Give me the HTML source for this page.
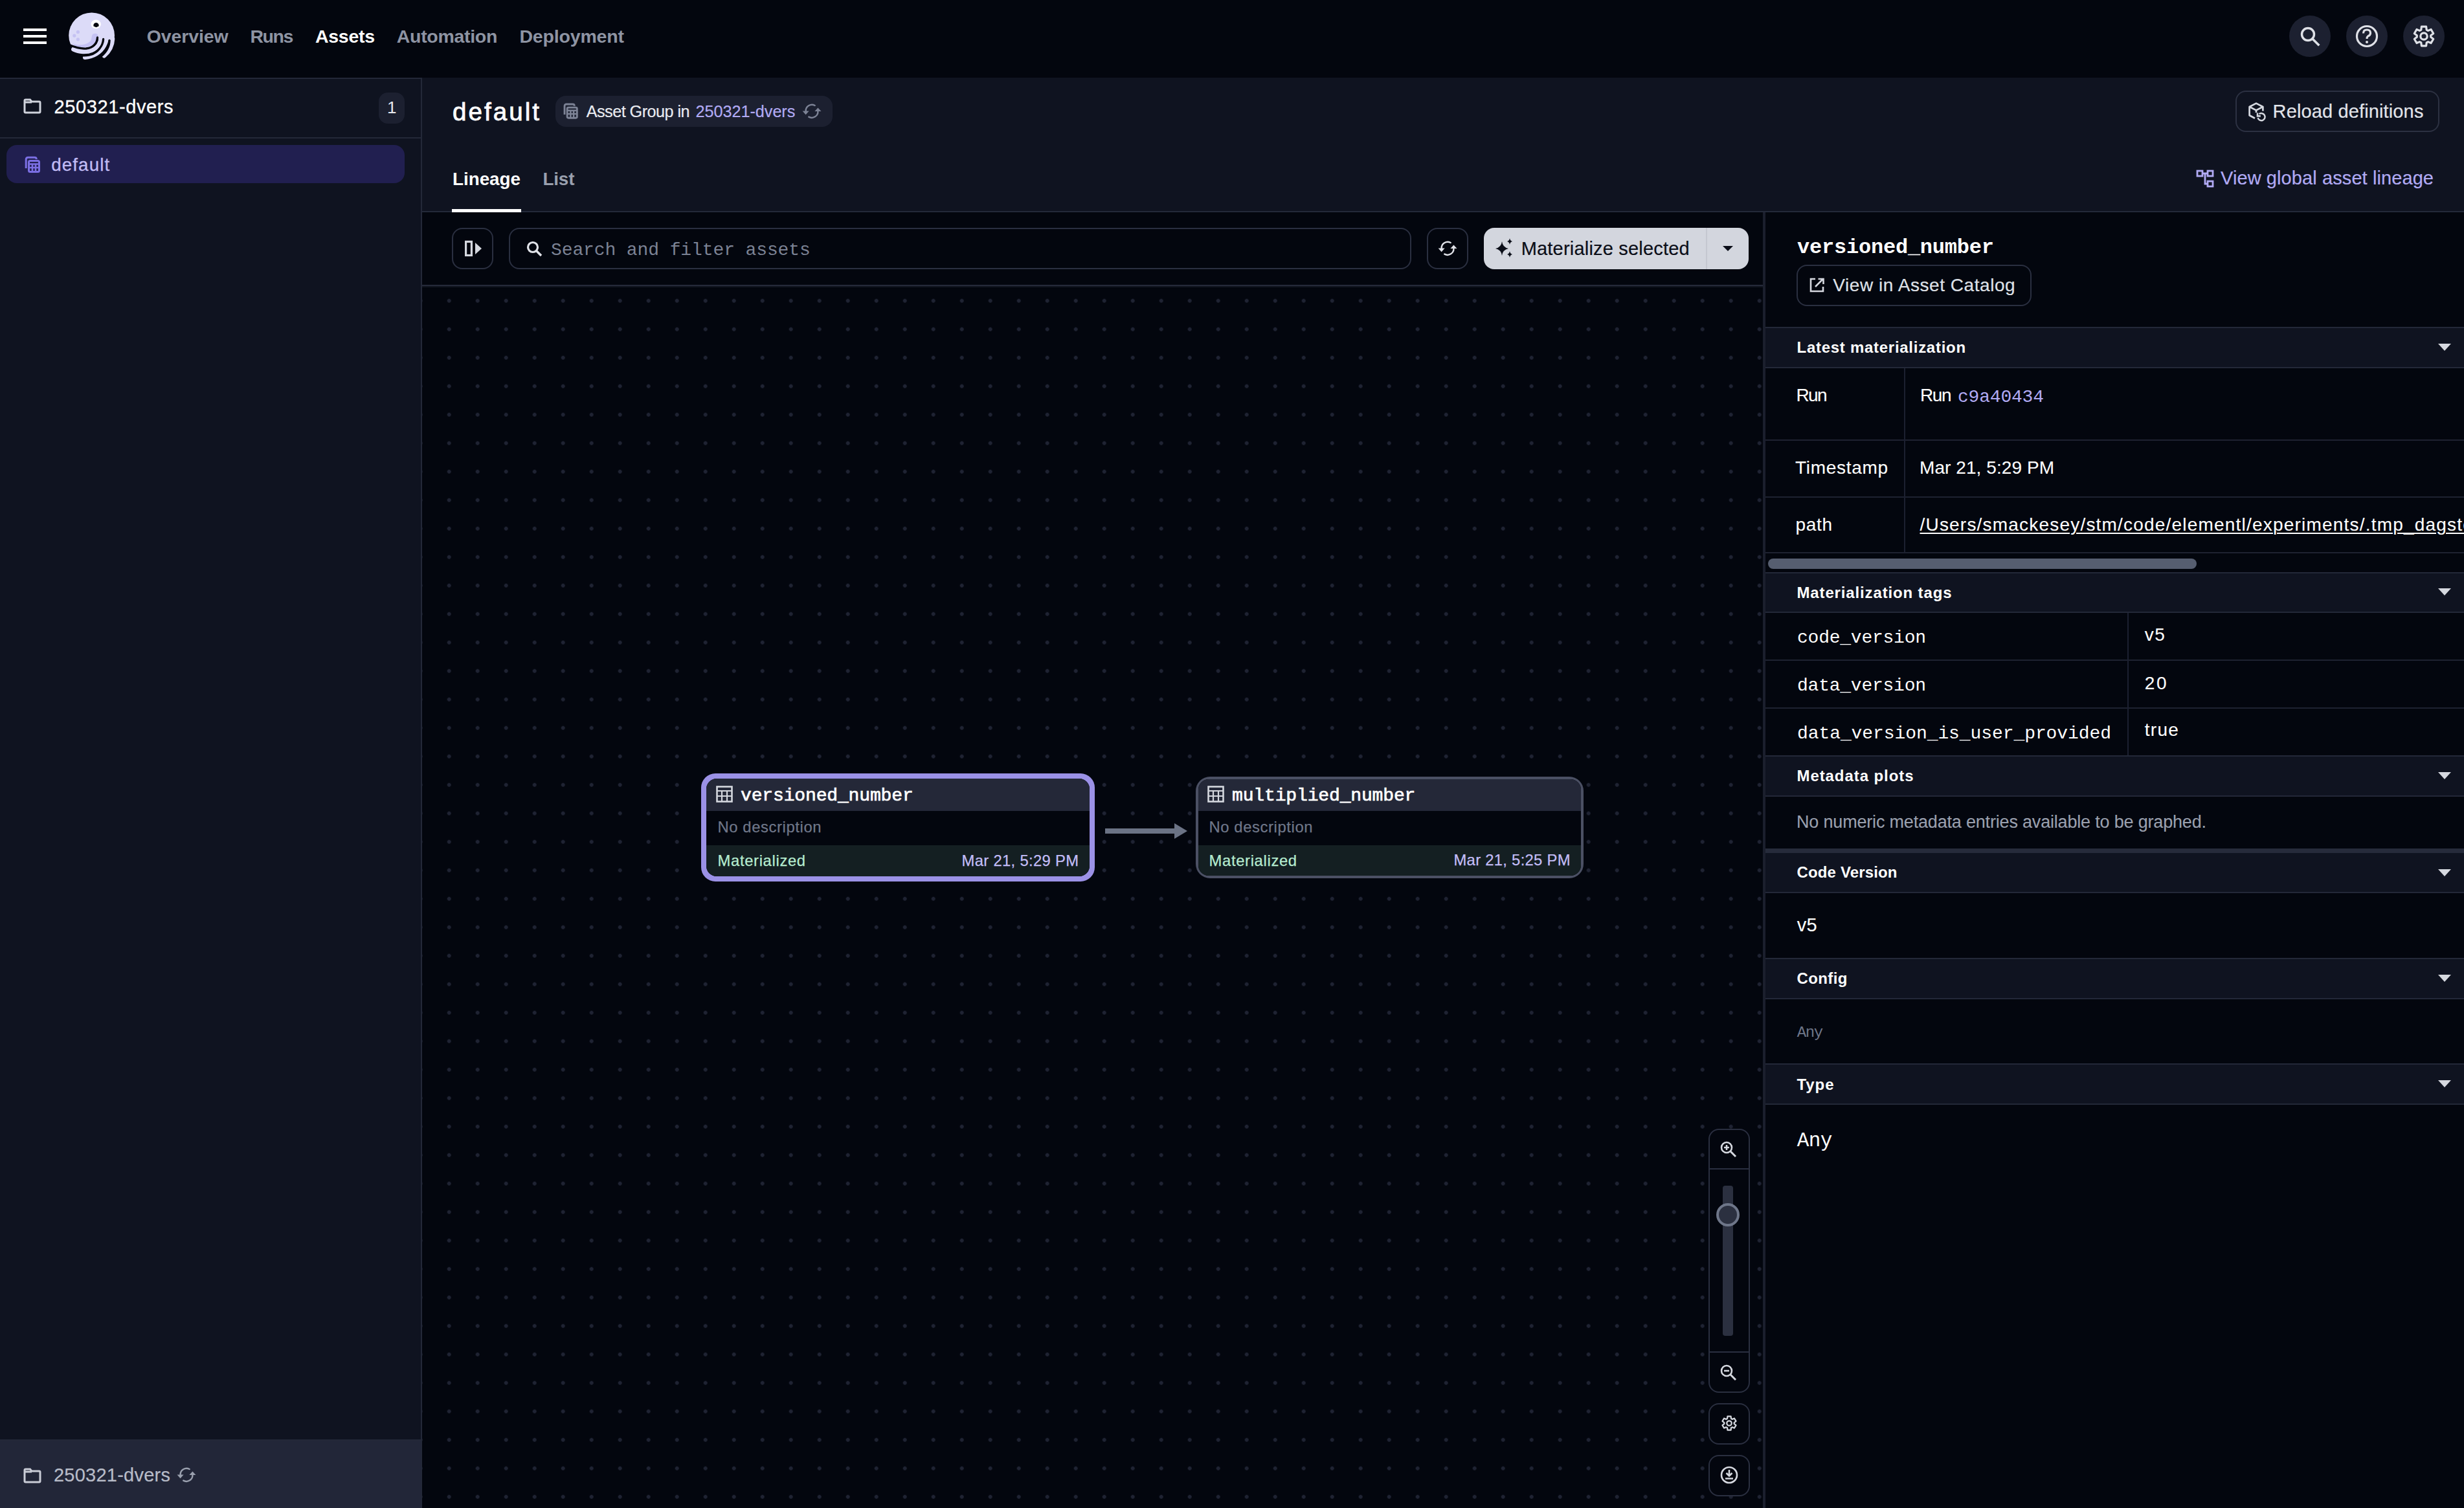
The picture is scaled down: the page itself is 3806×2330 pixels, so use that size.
<!DOCTYPE html>
<html><head><meta charset="utf-8"><title>Dagster</title>
<style>
html,body{margin:0;padding:0;}
body{width:3806px;height:2330px;overflow:hidden;position:relative;background:#03060e;font-family:"Liberation Sans",sans-serif;}
</style></head><body>
<div style="position:absolute;left:0px;top:0px;width:3806px;height:120px;background:#03060e"></div>
<div style="position:absolute;left:0px;top:120px;width:650px;height:2px;background:#232838"></div>
<div style="position:absolute;left:36px;top:44px;width:36px;height:4px;background:#fff"></div>
<div style="position:absolute;left:36px;top:54px;width:36px;height:4px;background:#fff"></div>
<div style="position:absolute;left:36px;top:64px;width:36px;height:4px;background:#fff"></div>
<svg style="position:absolute;left:100px;top:14px" width="84" height="84" viewBox="0 0 84 84">
<defs><clipPath id="hc"><path d="M0 0 H84 V44 L69 48.5 L59.6 46.5 L50.5 44 C 50 53 44 60 33 61 C 25 61.5 18 60 0 54 Z"/></clipPath></defs>
<circle cx="41.6" cy="40.8" r="35.4" fill="#dcdbf8" clip-path="url(#hc)"/>
<path d="M43.5 38.5 C 50 36 53 40 51 46 C 47 56 36 60 24 59 C 18 58.5 14 56 12 53 C 20 57 34 56 40 49 C 42 46 41 41 43.5 38.5 Z" fill="#c5c2f3"/>
<circle cx="20.4" cy="35.4" r="2.6" fill="#c5c2f3"/><circle cx="14.8" cy="41.1" r="2.6" fill="#c5c2f3"/><circle cx="20.4" cy="46.8" r="2.6" fill="#c5c2f3"/>
<path d="M13.6 62.2 C 22 66.5 34 67 42 63.5 C 52 59 56 52 55.5 44" stroke="#dcdbf8" stroke-width="7" fill="none" stroke-linecap="round"/>
<path d="M31.4 74.4 C 44 73.5 55 67 61 56 C 63 52 64.5 49 64.5 45" stroke="#dcdbf8" stroke-width="7" fill="none" stroke-linecap="round"/>
<path d="M60.8 72.2 C 68 66 73.5 58 74 46" stroke="#dcdbf8" stroke-width="6.6" fill="none" stroke-linecap="round"/>
<path d="M50.5 44 C 50 53 44 60 33 61 C 25 61.5 18 60 6 55" stroke="#03060e" stroke-width="3.3" fill="none" stroke-linecap="round"/>
<path d="M59.6 46.5 C 59 57 51 67 40 70.5 C 36 71.7 32 72 24 72" stroke="#03060e" stroke-width="3.3" fill="none" stroke-linecap="round"/>
<path d="M69 48.5 C 69 58 65 66 55 74" stroke="#03060e" stroke-width="3.3" fill="none" stroke-linecap="round"/>
<ellipse cx="48.2" cy="23.4" rx="7.6" ry="6.8" fill="#fff"/>
<path d="M44.5 26.5 A 4.2 4.2 0 1 1 52.5 26.5 L 48.5 28.2 Z" fill="#03060e"/>
</svg>
<div style="position:absolute;left:226.70px;top:41.87px;font:700 28.5px/28.5px 'Liberation Sans', sans-serif;color:#8e94a3;letter-spacing:-0.107px;white-space:nowrap;">Overview</div>
<div style="position:absolute;left:386.40px;top:41.87px;font:700 28.5px/28.5px 'Liberation Sans', sans-serif;color:#8e94a3;letter-spacing:-1.417px;white-space:nowrap;">Runs</div>
<div style="position:absolute;left:487.00px;top:41.87px;font:700 28.5px/28.5px 'Liberation Sans', sans-serif;color:#ffffff;letter-spacing:-0.296px;white-space:nowrap;">Assets</div>
<div style="position:absolute;left:612.80px;top:41.87px;font:700 28.5px/28.5px 'Liberation Sans', sans-serif;color:#8e94a3;letter-spacing:-0.313px;white-space:nowrap;">Automation</div>
<div style="position:absolute;left:802.40px;top:41.87px;font:700 28.5px/28.5px 'Liberation Sans', sans-serif;color:#8e94a3;letter-spacing:-0.168px;white-space:nowrap;">Deployment</div>
<div style="position:absolute;left:3536px;top:24px;width:64px;height:64px;border-radius:50%;background:#1c2030"></div>
<div style="position:absolute;left:3624px;top:24px;width:64px;height:64px;border-radius:50%;background:#1c2030"></div>
<div style="position:absolute;left:3712px;top:24px;width:64px;height:64px;border-radius:50%;background:#1c2030"></div>
<svg style="position:absolute;left:3548px;top:36px" width="40" height="40" viewBox="0 0 40 40">
<circle cx="17" cy="17" r="9.5" stroke="#dfe1e7" stroke-width="3.4" fill="none"/><path d="M24 24 L 33 33" stroke="#dfe1e7" stroke-width="3.6" stroke-linecap="square"/></svg>
<svg style="position:absolute;left:3636px;top:36px" width="40" height="40" viewBox="0 0 40 40">
<circle cx="20" cy="20" r="15.5" stroke="#dfe1e7" stroke-width="3.2" fill="none"/>
<path d="M14.5 15.5 Q 14.5 10 20 10 Q 25.5 10 25.5 15 Q 25.5 18.5 21.5 20 Q 20 21 20 24" stroke="#dfe1e7" stroke-width="3.2" fill="none"/>
<circle cx="20" cy="29" r="2" fill="#dfe1e7"/></svg>
<svg style="position:absolute;left:3724px;top:36px" width="40" height="40" viewBox="0 0 40 40"><path d="M15.80 10.05 L16.40 5.13 L23.60 5.13 L24.20 10.05 L26.52 11.39 L31.08 9.45 L34.68 15.68 L30.72 18.66 L30.72 21.34 L34.68 24.32 L31.08 30.55 L26.52 28.61 L24.20 29.95 L23.60 34.87 L16.40 34.87 L15.80 29.95 L13.48 28.61 L8.92 30.55 L5.32 24.32 L9.28 21.34 L9.28 18.66 L5.32 15.68 L8.92 9.45 L13.48 11.39 Z" stroke="#dfe1e7" stroke-width="3.2" fill="none" stroke-linejoin="round"/><circle cx="20" cy="20" r="5.2" stroke="#dfe1e7" stroke-width="3.2" fill="none"/></svg>
<div style="position:absolute;left:0px;top:122px;width:650px;height:2208px;background:#0f1320"></div>
<div style="position:absolute;left:650px;top:120px;width:2px;height:2210px;background:#232838"></div>
<div style="position:absolute;left:0px;top:212px;width:650px;height:2px;background:#232838"></div>
<svg style="position:absolute;left:36px;top:152px" width="28" height="24" viewBox="0 0 28 24">
<path d="M2 3.5 Q2 2 3.5 2 H10.5 L13 5 H24.5 Q26 5 26 6.5 V20.5 Q26 22 24.5 22 H3.5 Q2 22 2 20.5 Z" stroke="#d0d3dc" stroke-width="3" fill="none"/>
<path d="M2 6 H13" stroke="#d0d3dc" stroke-width="3"/></svg>
<div style="position:absolute;left:83.50px;top:151.05px;font:400 29px/29px 'Liberation Sans', sans-serif;color:#ffffff;letter-spacing:0.605px;white-space:nowrap;-webkit-text-stroke:0.3px #ffffff;">250321-dvers</div>
<div style="position:absolute;left:585px;top:143px;width:40px;height:48px;background:#1c2030;border-radius:14px"></div>
<div style="position:absolute;left:598.00px;top:152.99px;font:400 26px/26px 'Liberation Sans', sans-serif;color:#e6e8ee;letter-spacing:0.000px;white-space:nowrap;">1</div>
<div style="position:absolute;left:10px;top:224px;width:615px;height:59px;background:#211f50;border-radius:16px"></div>
<svg style="position:absolute;left:37px;top:240px" width="26.0" height="28.0" viewBox="0 0 26 28">
<path d="M3.2 20 V6.2 Q3.2 3.2 6.2 3.2 H16.5 Q19.3 3.2 19.3 6" stroke="#7b6fe3" stroke-width="3" fill="none"/>
<rect x="7.5" y="8.5" width="16" height="17" rx="2" stroke="#7b6fe3" stroke-width="3" fill="none"/>
<path d="M7.5 13.5 H23.5 M7.5 19 H23.5 M13 13.5 V25.5 M18 13.5 V25.5" stroke="#7b6fe3" stroke-width="2.6"/></svg>
<div style="position:absolute;left:79.20px;top:240.77px;font:400 27.8px/27.8px 'Liberation Sans', sans-serif;color:#c1bcf5;letter-spacing:1.088px;white-space:nowrap;-webkit-text-stroke:0.3px #c1bcf5;">default</div>
<div style="position:absolute;left:0px;top:2224px;width:650px;height:2px;background:#232838"></div>
<div style="position:absolute;left:0px;top:2226px;width:650px;height:104px;background:#222638"></div>
<svg style="position:absolute;left:36px;top:2268px" width="28" height="24" viewBox="0 0 28 24">
<path d="M2 3.5 Q2 2 3.5 2 H10.5 L13 5 H24.5 Q26 5 26 6.5 V20.5 Q26 22 24.5 22 H3.5 Q2 22 2 20.5 Z" stroke="#c9ccd6" stroke-width="3" fill="none"/>
<path d="M2 6 H13" stroke="#c9ccd6" stroke-width="3"/></svg>
<div style="position:absolute;left:83.00px;top:2265.45px;font:400 29px/29px 'Liberation Sans', sans-serif;color:#b8bcc8;letter-spacing:0.241px;white-space:nowrap;-webkit-text-stroke:0.2px #b8bcc8;">250321-dvers</div>
<svg style="position:absolute;left:268px;top:2259px" width="40" height="40" viewBox="0 0 40 40">
<path d="M24.7 11 A9.5 9.5 0 0 0 10.6 19.8" stroke="#9aa0ae" stroke-width="2.4" fill="none" stroke-linecap="round"/>
<path d="M5.6 19.6 L15.6 19.6 L10.6 25.2 Z" fill="#9aa0ae"/>
<path d="M15.3 28.6 A9.5 9.5 0 0 0 29.4 19.6" stroke="#9aa0ae" stroke-width="2.4" fill="none" stroke-linecap="round"/>
<path d="M24.4 19.9 L34.5 19.9 L29.4 14.6 Z" fill="#9aa0ae"/></svg>
<div style="position:absolute;left:652px;top:120px;width:3154px;height:206px;background:#0f1320"></div>
<div style="position:absolute;left:652px;top:326px;width:3154px;height:2px;background:#242939"></div>
<div style="position:absolute;left:699.00px;top:153.71px;font:400 38.5px/38.5px 'Liberation Sans', sans-serif;color:#ffffff;letter-spacing:3.067px;white-space:nowrap;-webkit-text-stroke:0.8px #ffffff;">default</div>
<div style="position:absolute;left:858px;top:148px;width:428px;height:48px;background:#1c2030;border-radius:16px"></div>
<svg style="position:absolute;left:869px;top:158px" width="24.7" height="26.599999999999998" viewBox="0 0 26 28">
<path d="M3.2 20 V6.2 Q3.2 3.2 6.2 3.2 H16.5 Q19.3 3.2 19.3 6" stroke="#7d8396" stroke-width="3" fill="none"/>
<rect x="7.5" y="8.5" width="16" height="17" rx="2" stroke="#7d8396" stroke-width="3" fill="none"/>
<path d="M7.5 13.5 H23.5 M7.5 19 H23.5 M13 13.5 V25.5 M18 13.5 V25.5" stroke="#7d8396" stroke-width="2.6"/></svg>
<div style="position:absolute;left:905.70px;top:159.67px;font:400 25.2px/25.2px 'Liberation Sans', sans-serif;color:#e9ebf0;letter-spacing:-0.514px;white-space:nowrap;-webkit-text-stroke:0.2px #e9ebf0;">Asset Group in</div>
<div style="position:absolute;left:1074.60px;top:159.67px;font:400 25.2px/25.2px 'Liberation Sans', sans-serif;color:#b1aaf3;letter-spacing:-0.028px;white-space:nowrap;-webkit-text-stroke:0.2px #b1aaf3;">250321-dvers</div>
<svg style="position:absolute;left:1234px;top:152px" width="40" height="40" viewBox="0 0 40 40">
<path d="M24.7 11 A9.5 9.5 0 0 0 10.6 19.8" stroke="#7d8396" stroke-width="2.4" fill="none" stroke-linecap="round"/>
<path d="M5.6 19.6 L15.6 19.6 L10.6 25.2 Z" fill="#7d8396"/>
<path d="M15.3 28.6 A9.5 9.5 0 0 0 29.4 19.6" stroke="#7d8396" stroke-width="2.4" fill="none" stroke-linecap="round"/>
<path d="M24.4 19.9 L34.5 19.9 L29.4 14.6 Z" fill="#7d8396"/></svg>
<div style="position:absolute;left:3453px;top:140px;width:315px;height:64px;border:2px solid #2c3142;border-radius:16px;box-sizing:border-box"></div>
<svg style="position:absolute;left:3466px;top:152px" width="40" height="40" viewBox="0 0 40 40">
<path d="M17 30.8 L8.6 26.2 V13 L19 7.6 L29.4 13 V19.6" stroke="#d5d8df" stroke-width="2.7" fill="none" stroke-linejoin="round"/>
<path d="M8.6 13 L19 18.4 L29.4 13 M19 18.4 V22" stroke="#d5d8df" stroke-width="2.7" fill="none" stroke-linejoin="round"/>
<path d="M21.6 30.2 A5.6 5.6 0 1 0 23.6 24.2" stroke="#d5d8df" stroke-width="2.5" fill="none"/>
<path d="M21 22.6 V27.4 H25.8" stroke="#d5d8df" stroke-width="2.6" fill="none"/></svg>
<div style="position:absolute;left:3510.60px;top:157.65px;font:400 29px/29px 'Liberation Sans', sans-serif;color:#e2e4ea;letter-spacing:0.132px;white-space:nowrap;-webkit-text-stroke:0.2px #e2e4ea;">Reload definitions</div>
<div style="position:absolute;left:699.00px;top:262.77px;font:700 27.8px/27.8px 'Liberation Sans', sans-serif;color:#ffffff;letter-spacing:-0.009px;white-space:nowrap;">Lineage</div>
<div style="position:absolute;left:838.40px;top:262.77px;font:700 27.8px/27.8px 'Liberation Sans', sans-serif;color:#9aa0ae;letter-spacing:-0.142px;white-space:nowrap;">List</div>
<div style="position:absolute;left:698px;top:323px;width:107px;height:5px;background:#fff"></div>
<svg style="position:absolute;left:3392px;top:262px" width="28" height="28" viewBox="0 0 28 28">
<rect x="2" y="2" width="8" height="8" stroke="#b1aaf3" stroke-width="2.8" fill="none"/>
<rect x="18" y="2" width="8" height="8" stroke="#b1aaf3" stroke-width="2.8" fill="none"/>
<rect x="18" y="18" width="8" height="8" stroke="#b1aaf3" stroke-width="2.8" fill="none"/>
<path d="M10 6 H18 M14 6 V22 H18" stroke="#b1aaf3" stroke-width="2.8" fill="none"/></svg>
<div style="position:absolute;left:3430.00px;top:261.45px;font:400 29px/29px 'Liberation Sans', sans-serif;color:#b1aaf3;letter-spacing:0.094px;white-space:nowrap;-webkit-text-stroke:0.2px #b1aaf3;">View global asset lineage</div>
<div style="position:absolute;left:652px;top:328px;width:2071px;height:2002px;background:#03060e"></div>
<div style="position:absolute;left:652px;top:443px;width:2071px;height:1887px;background-image:radial-gradient(circle, #1f2333 2.6px, transparent 3.2px);background-size:44px 44px;background-position:19.7px -0.3px"></div>
<div style="position:absolute;left:652px;top:328px;width:2071px;height:112px;background:#03060e"></div>
<div style="position:absolute;left:652px;top:440px;width:2071px;height:2px;background:#252a3a"></div>
<div style="position:absolute;left:652px;top:442px;width:2071px;height:2px;background:#10141f"></div>
<div style="position:absolute;left:698px;top:352px;width:64px;height:64px;border:2px solid #2a2f40;border-radius:16px;box-sizing:border-box"></div>
<svg style="position:absolute;left:710px;top:364px" width="40" height="40" viewBox="0 0 40 40">
<rect x="9.6" y="9.4" width="8.8" height="21.1" stroke="#d5d8df" stroke-width="3.2" fill="none"/>
<path d="M24 11 L34 20 L24 29 Z" fill="#d5d8df"/></svg>
<div style="position:absolute;left:786px;top:352px;width:1394px;height:64px;border:2px solid #2a2f40;border-radius:16px;box-sizing:border-box"></div>
<svg style="position:absolute;left:811px;top:370px" width="30" height="30" viewBox="0 0 30 30">
<circle cx="12" cy="12" r="7.5" stroke="#e1e3e9" stroke-width="3.2" fill="none"/><path d="M17.5 17.5 L25 25" stroke="#e1e3e9" stroke-width="3.6"/></svg>
<div style="position:absolute;left:851.00px;top:373.15px;font:400 28px/28px 'Liberation Mono', monospace;color:#7b8294;letter-spacing:-0.107px;white-space:nowrap;">Search and filter assets</div>
<div style="position:absolute;left:2204px;top:352px;width:64px;height:64px;border:2px solid #2a2f40;border-radius:16px;box-sizing:border-box"></div>
<svg style="position:absolute;left:2216px;top:364px" width="40" height="40" viewBox="0 0 40 40">
<path d="M24.7 11 A9.5 9.5 0 0 0 10.6 19.8" stroke="#e1e3e9" stroke-width="2.4" fill="none" stroke-linecap="round"/>
<path d="M5.6 19.6 L15.6 19.6 L10.6 25.2 Z" fill="#e1e3e9"/>
<path d="M15.3 28.6 A9.5 9.5 0 0 0 29.4 19.6" stroke="#e1e3e9" stroke-width="2.4" fill="none" stroke-linecap="round"/>
<path d="M24.4 19.9 L34.5 19.9 L29.4 14.6 Z" fill="#e1e3e9"/></svg>
<div style="position:absolute;left:2292px;top:352px;width:409px;height:64px;background:#d3d6de;border-radius:16px"></div>
<div style="position:absolute;left:2635px;top:352px;width:2px;height:64px;background:#c4c7d0"></div>
<svg style="position:absolute;left:2308px;top:367px" width="32" height="32" viewBox="0 0 32 32">
<path d="M12 6 Q13 15 22 17 Q13 19 12 28 Q11 19 2 17 Q11 15 12 6 Z" fill="#0b0e18"/>
<path d="M24 1 Q24.5 5 28 6 Q24.5 7 24 11 Q23.5 7 20 6 Q23.5 5 24 1 Z" fill="#0b0e18"/>
<path d="M24 21 Q24.5 25 28 26 Q24.5 27 24 31 Q23.5 27 20 26 Q23.5 25 24 21 Z" fill="#0b0e18"/></svg>
<div style="position:absolute;left:2349.70px;top:369.75px;font:400 29px/29px 'Liberation Sans', sans-serif;color:#0b0e18;letter-spacing:0.195px;white-space:nowrap;-webkit-text-stroke:0.2px #0b0e18;">Materialize selected</div>
<svg style="position:absolute;left:2659px;top:378px" width="20" height="12" viewBox="0 0 20 12"><path d="M2 2 H18 L10 10 Z" fill="#0b0e18"/></svg>
<div style="position:absolute;left:1083px;top:1195px;width:608px;height:167px;background:#9b91e6;border-radius:22px"></div>
<div style="position:absolute;left:1091px;top:1203px;width:592px;height:151px;border-radius:16px;overflow:hidden;background:#03060e"><div style="position:absolute;left:0;top:0;right:0;height:50px;background:#242838"></div><div style="position:absolute;left:0;top:103px;right:0;bottom:0;background:#141f22"></div></div>
<svg style="position:absolute;left:1106px;top:1214px" width="26" height="26" viewBox="0 0 26 26">
<rect x="1.5" y="1.5" width="23" height="23" stroke="#d4d7de" stroke-width="2.6" fill="none"/>
<path d="M1.5 8 H24.5 M1.5 16 H24.5 M9 8 V24.5 M17 8 V24.5" stroke="#d4d7de" stroke-width="2.2"/></svg>
<div style="position:absolute;left:1144.00px;top:1216.05px;font:400 28px/28px 'Liberation Mono', monospace;color:#ffffff;letter-spacing:-0.141px;white-space:nowrap;-webkit-text-stroke:0.7px #ffffff;">versioned_number</div>
<div style="position:absolute;left:1108.50px;top:1265.85px;font:400 23.8px/23.8px 'Liberation Sans', sans-serif;color:#6f7789;letter-spacing:0.605px;white-space:nowrap;-webkit-text-stroke:0.25px #6f7789;">No description</div>
<div style="position:absolute;left:1108.50px;top:1317.65px;font:400 23.8px/23.8px 'Liberation Sans', sans-serif;color:#b6ecd0;letter-spacing:0.662px;white-space:nowrap;-webkit-text-stroke:0.25px #b6ecd0;">Materialized</div>
<div style="position:absolute;left:1847px;top:1200px;width:599px;height:157px;background:#4b5064;border-radius:22px"></div>
<div style="position:absolute;left:1851px;top:1204px;width:591px;height:149px;border-radius:16px;overflow:hidden;background:#03060e"><div style="position:absolute;left:0;top:0;right:0;height:49px;background:#242838"></div><div style="position:absolute;left:0;top:102px;right:0;bottom:0;background:#141f22"></div></div>
<svg style="position:absolute;left:1865px;top:1214px" width="26" height="26" viewBox="0 0 26 26">
<rect x="1.5" y="1.5" width="23" height="23" stroke="#d4d7de" stroke-width="2.6" fill="none"/>
<path d="M1.5 8 H24.5 M1.5 16 H24.5 M9 8 V24.5 M17 8 V24.5" stroke="#d4d7de" stroke-width="2.2"/></svg>
<div style="position:absolute;left:1903.00px;top:1216.05px;font:400 28px/28px 'Liberation Mono', monospace;color:#ffffff;letter-spacing:-0.140px;white-space:nowrap;-webkit-text-stroke:0.7px #ffffff;">multiplied_number</div>
<div style="position:absolute;left:1867.50px;top:1265.85px;font:400 23.8px/23.8px 'Liberation Sans', sans-serif;color:#6f7789;letter-spacing:0.605px;white-space:nowrap;-webkit-text-stroke:0.25px #6f7789;">No description</div>
<div style="position:absolute;left:1867.50px;top:1317.65px;font:400 23.8px/23.8px 'Liberation Sans', sans-serif;color:#b6ecd0;letter-spacing:0.662px;white-space:nowrap;-webkit-text-stroke:0.25px #b6ecd0;">Materialized</div>
<div style="position:absolute;left:1485.50px;top:1317.65px;font:400 23.8px/23.8px 'Liberation Sans', sans-serif;color:#c3bdf7;letter-spacing:0.326px;white-space:nowrap;-webkit-text-stroke:0.25px #c3bdf7;">Mar 21, 5:29 PM</div>
<div style="position:absolute;left:2245.50px;top:1317.35px;font:400 23.8px/23.8px 'Liberation Sans', sans-serif;color:#c3bdf7;letter-spacing:0.290px;white-space:nowrap;-webkit-text-stroke:0.25px #c3bdf7;">Mar 21, 5:25 PM</div>
<div style="position:absolute;left:1707px;top:1280px;width:109px;height:8px;background:#6b7385"></div>
<svg style="position:absolute;left:1812px;top:1271px" width="24" height="26" viewBox="0 0 24 26"><path d="M2 1 L22 13 L2 25 Z" fill="#6b7385"/></svg>
<div style="position:absolute;left:2639px;top:1744px;width:64px;height:408px;border:2px solid #2a2f40;border-radius:16px;box-sizing:border-box;background:#03060e"></div>
<div style="position:absolute;left:2639px;top:1805px;width:64px;height:2px;background:#2a2f40"></div>
<div style="position:absolute;left:2639px;top:2088px;width:64px;height:2px;background:#2a2f40"></div>
<div style="position:absolute;left:2661px;top:1832px;width:16px;height:232px;background:#2b3040;border-radius:4px"></div>
<div style="position:absolute;left:2651px;top:1859px;width:36px;height:36px;border-radius:50%;background:#2b3040;border:4px solid #6e7689;box-sizing:border-box"></div>
<svg style="position:absolute;left:2654px;top:1760px" width="32" height="32" viewBox="0 0 32 32">
<circle cx="13" cy="13" r="8" stroke="#d5d8df" stroke-width="2.6" fill="none"/><path d="M19 19 L27 27" stroke="#d5d8df" stroke-width="3"/>
<path d="M9 13 H17 M13 9 V17" stroke="#d5d8df" stroke-width="2.6"/></svg>
<svg style="position:absolute;left:2654px;top:2105px" width="32" height="32" viewBox="0 0 32 32">
<circle cx="13" cy="13" r="8" stroke="#d5d8df" stroke-width="2.6" fill="none"/><path d="M19 19 L27 27" stroke="#d5d8df" stroke-width="3"/>
<path d="M9 13 H17" stroke="#d5d8df" stroke-width="2.6"/></svg>
<div style="position:absolute;left:2639px;top:2168px;width:64px;height:64px;border:2px solid #2a2f40;border-radius:16px;box-sizing:border-box;background:#03060e"></div>
<svg style="position:absolute;left:2656px;top:2184px" width="30" height="30" viewBox="-1 -1 42 42"><path d="M15.80 10.05 L16.40 5.13 L23.60 5.13 L24.20 10.05 L26.52 11.39 L31.08 9.45 L34.68 15.68 L30.72 18.66 L30.72 21.34 L34.68 24.32 L31.08 30.55 L26.52 28.61 L24.20 29.95 L23.60 34.87 L16.40 34.87 L15.80 29.95 L13.48 28.61 L8.92 30.55 L5.32 24.32 L9.28 21.34 L9.28 18.66 L5.32 15.68 L8.92 9.45 L13.48 11.39 Z" stroke="#d5d8df" stroke-width="3.2" fill="none" stroke-linejoin="round"/><circle cx="20" cy="20" r="5.2" stroke="#d5d8df" stroke-width="3.2" fill="none"/></svg>
<div style="position:absolute;left:2639px;top:2248px;width:64px;height:64px;border:2px solid #2a2f40;border-radius:16px;box-sizing:border-box;background:#03060e"></div>
<svg style="position:absolute;left:2655px;top:2263px" width="32" height="32" viewBox="0 0 32 32">
<circle cx="16" cy="16" r="12" stroke="#d5d8df" stroke-width="2.6" fill="none"/>
<path d="M16 8 V17 M11.5 13 L16 17.5 L20.5 13 M10 21.5 H22" stroke="#d5d8df" stroke-width="2.6" fill="none"/></svg>
<div style="position:absolute;left:2723px;top:328px;width:4px;height:2002px;background:#1b1f2d"></div>
<div style="position:absolute;left:2727px;top:328px;width:1079px;height:2002px;background:#03060e"></div>
<div style="position:absolute;left:2776.00px;top:367.18px;font:700 32px/32px 'Liberation Mono', monospace;color:#ffffff;letter-spacing:-0.216px;white-space:nowrap;">versioned_number</div>
<div style="position:absolute;left:2775px;top:409px;width:363px;height:64px;border:2px solid #2a2f40;border-radius:16px;box-sizing:border-box"></div>
<svg style="position:absolute;left:2792px;top:426px" width="30" height="30" viewBox="0 0 30 30">
<path d="M12 5 H5 V24 H24 V17" stroke="#d5d8df" stroke-width="2.6" fill="none"/>
<path d="M12 17 L24 5 M16.5 5 H24.5 V13" stroke="#d5d8df" stroke-width="2.6" fill="none"/></svg>
<div style="position:absolute;left:2831.30px;top:427.00px;font:400 28px/28px 'Liberation Sans', sans-serif;color:#dfe1e7;letter-spacing:0.554px;white-space:nowrap;-webkit-text-stroke:0.2px #dfe1e7;">View in Asset Catalog</div>
<div style="position:absolute;left:2727px;top:505px;width:1079px;height:2px;background:#232838"></div>
<div style="position:absolute;left:2727px;top:507px;width:1079px;height:60px;background:#0f1320"></div>
<div style="position:absolute;left:2727px;top:567px;width:1079px;height:2px;background:#232838"></div>
<div style="position:absolute;left:2775.50px;top:524.68px;font:700 24px/24px 'Liberation Sans', sans-serif;color:#ffffff;letter-spacing:0.723px;white-space:nowrap;">Latest materialization</div>
<svg style="position:absolute;left:3765px;top:530px" width="22" height="14" viewBox="0 0 22 14"><path d="M1 1 H21 L11 12 Z" fill="#d5d8df"/></svg>
<div style="position:absolute;left:2727px;top:679px;width:1079px;height:2px;background:#1e2231"></div>
<div style="position:absolute;left:2727px;top:767px;width:1079px;height:2px;background:#1e2231"></div>
<div style="position:absolute;left:2727px;top:853px;width:1079px;height:2px;background:#1e2231"></div>
<div style="position:absolute;left:2941px;top:569px;width:2px;height:284px;background:#1c2030"></div>
<div style="position:absolute;left:2774.50px;top:597.30px;font:400 28px/28px 'Liberation Sans', sans-serif;color:#ffffff;letter-spacing:-1.683px;white-space:nowrap;-webkit-text-stroke:0.1px #ffffff;">Run</div>
<div style="position:absolute;left:2966.00px;top:597.30px;font:400 28px/28px 'Liberation Sans', sans-serif;color:#ffffff;letter-spacing:-1.433px;white-space:nowrap;-webkit-text-stroke:0.1px #ffffff;">Run</div>
<div style="position:absolute;left:3024.00px;top:599.55px;font:400 28px/28px 'Liberation Mono', monospace;color:#b1aaf3;letter-spacing:-0.202px;white-space:nowrap;">c9a40434</div>
<div style="position:absolute;left:2773.00px;top:709.30px;font:400 28px/28px 'Liberation Sans', sans-serif;color:#ffffff;letter-spacing:0.696px;white-space:nowrap;-webkit-text-stroke:0.1px #ffffff;">Timestamp</div>
<div style="position:absolute;left:2965.00px;top:709.30px;font:400 28px/28px 'Liberation Sans', sans-serif;color:#ffffff;letter-spacing:0.073px;white-space:nowrap;-webkit-text-stroke:0.1px #ffffff;">Mar 21, 5:29 PM</div>
<div style="position:absolute;left:2773.50px;top:797.30px;font:400 28px/28px 'Liberation Sans', sans-serif;color:#ffffff;letter-spacing:0.668px;white-space:nowrap;-webkit-text-stroke:0.1px #ffffff;">path</div>
<div style="position:absolute;left:2965.50px;top:797.30px;font:400 28px/28px 'Liberation Sans', sans-serif;color:#ffffff;letter-spacing:1.200px;white-space:nowrap;-webkit-text-stroke:0.1px #ffffff;text-decoration:underline;text-underline-offset:3px;text-decoration-thickness:2px">/Users/smackesey/stm/code/elementl/experiments/.tmp_dagster_home</div>
<div style="position:absolute;left:2727px;top:855px;width:1079px;height:30px;background:#03060e"></div>
<div style="position:absolute;left:2731px;top:863px;width:662px;height:16px;background:#565e70;border-radius:8px"></div>
<div style="position:absolute;left:2727px;top:884px;width:1079px;height:2px;background:#232838"></div>
<div style="position:absolute;left:2727px;top:886px;width:1079px;height:59px;background:#0f1320"></div>
<div style="position:absolute;left:2727px;top:945px;width:1079px;height:2px;background:#232838"></div>
<div style="position:absolute;left:2775.50px;top:903.68px;font:700 24px/24px 'Liberation Sans', sans-serif;color:#ffffff;letter-spacing:0.857px;white-space:nowrap;">Materialization tags</div>
<svg style="position:absolute;left:3765px;top:908px" width="22" height="14" viewBox="0 0 22 14"><path d="M1 1 H21 L11 12 Z" fill="#d5d8df"/></svg>
<div style="position:absolute;left:2727px;top:1019px;width:1079px;height:2px;background:#1e2231"></div>
<div style="position:absolute;left:2727px;top:1093px;width:1079px;height:2px;background:#1e2231"></div>
<div style="position:absolute;left:3286px;top:947px;width:2px;height:220px;background:#1c2030"></div>
<div style="position:absolute;left:2776.00px;top:971.85px;font:400 28px/28px 'Liberation Mono', monospace;color:#ffffff;letter-spacing:-0.239px;white-space:nowrap;">code_version</div>
<div style="position:absolute;left:2776.00px;top:1045.55px;font:400 28px/28px 'Liberation Mono', monospace;color:#ffffff;letter-spacing:-0.239px;white-space:nowrap;">data_version</div>
<div style="position:absolute;left:2776.00px;top:1120.05px;font:400 28px/28px 'Liberation Mono', monospace;color:#ffffff;letter-spacing:-0.081px;white-space:nowrap;">data_version_is_user_provided</div>
<div style="position:absolute;left:3312.80px;top:966.80px;font:400 28px/28px 'Liberation Sans', sans-serif;color:#ffffff;letter-spacing:1.427px;white-space:nowrap;-webkit-text-stroke:0.1px #ffffff;">v5</div>
<div style="position:absolute;left:3312.80px;top:1041.90px;font:400 28px/28px 'Liberation Sans', sans-serif;color:#ffffff;letter-spacing:2.554px;white-space:nowrap;-webkit-text-stroke:0.1px #ffffff;">20</div>
<div style="position:absolute;left:3312.80px;top:1114.30px;font:400 28px/28px 'Liberation Sans', sans-serif;color:#ffffff;letter-spacing:1.250px;white-space:nowrap;-webkit-text-stroke:0.1px #ffffff;">true</div>
<div style="position:absolute;left:2727px;top:1167px;width:1079px;height:2px;background:#232838"></div>
<div style="position:absolute;left:2727px;top:1169px;width:1079px;height:60px;background:#0f1320"></div>
<div style="position:absolute;left:2727px;top:1229px;width:1079px;height:2px;background:#232838"></div>
<div style="position:absolute;left:2775.50px;top:1186.68px;font:700 24px/24px 'Liberation Sans', sans-serif;color:#ffffff;letter-spacing:0.921px;white-space:nowrap;">Metadata plots</div>
<svg style="position:absolute;left:3765px;top:1192px" width="22" height="14" viewBox="0 0 22 14"><path d="M1 1 H21 L11 12 Z" fill="#d5d8df"/></svg>
<div style="position:absolute;left:2775.00px;top:1257.14px;font:400 27px/27px 'Liberation Sans', sans-serif;color:#9aa0ae;letter-spacing:-0.184px;white-space:nowrap;-webkit-text-stroke:0.1px #9aa0ae;">No numeric metadata entries available to be graphed.</div>
<div style="position:absolute;left:2727px;top:1311px;width:1079px;height:7px;background:#262b3b"></div>
<div style="position:absolute;left:2727px;top:1318px;width:1079px;height:60px;background:#0f1320"></div>
<div style="position:absolute;left:2727px;top:1378px;width:1079px;height:2px;background:#232838"></div>
<div style="position:absolute;left:2775.50px;top:1335.68px;font:700 24px/24px 'Liberation Sans', sans-serif;color:#ffffff;letter-spacing:0.147px;white-space:nowrap;">Code Version</div>
<svg style="position:absolute;left:3765px;top:1342px" width="22" height="14" viewBox="0 0 22 14"><path d="M1 1 H21 L11 12 Z" fill="#d5d8df"/></svg>
<div style="position:absolute;left:2775.70px;top:1415.45px;font:400 29px/29px 'Liberation Sans', sans-serif;color:#ffffff;letter-spacing:0.371px;white-space:nowrap;-webkit-text-stroke:0.1px #ffffff;">v5</div>
<div style="position:absolute;left:2727px;top:1480px;width:1079px;height:2px;background:#232838"></div>
<div style="position:absolute;left:2727px;top:1482px;width:1079px;height:60px;background:#0f1320"></div>
<div style="position:absolute;left:2727px;top:1542px;width:1079px;height:2px;background:#232838"></div>
<div style="position:absolute;left:2775.50px;top:1499.68px;font:700 24px/24px 'Liberation Sans', sans-serif;color:#ffffff;letter-spacing:0.405px;white-space:nowrap;">Config</div>
<svg style="position:absolute;left:3765px;top:1505px" width="22" height="14" viewBox="0 0 22 14"><path d="M1 1 H21 L11 12 Z" fill="#d5d8df"/></svg>
<div style="position:absolute;left:2775.70px;top:1583.61px;font:400 24px/24px 'Liberation Mono', monospace;color:#6f7689;letter-spacing:-1.353px;white-space:nowrap;">Any</div>
<div style="position:absolute;left:2727px;top:1643px;width:1079px;height:2px;background:#232838"></div>
<div style="position:absolute;left:2727px;top:1645px;width:1079px;height:60px;background:#0f1320"></div>
<div style="position:absolute;left:2727px;top:1705px;width:1079px;height:2px;background:#232838"></div>
<div style="position:absolute;left:2775.50px;top:1663.68px;font:700 24px/24px 'Liberation Sans', sans-serif;color:#ffffff;letter-spacing:0.921px;white-space:nowrap;">Type</div>
<svg style="position:absolute;left:3765px;top:1668px" width="22" height="14" viewBox="0 0 22 14"><path d="M1 1 H21 L11 12 Z" fill="#d5d8df"/></svg>
<div style="position:absolute;left:2775.70px;top:1747.25px;font:400 31px/31px 'Liberation Mono', monospace;color:#ffffff;letter-spacing:-0.554px;white-space:nowrap;">Any</div>
</body></html>
